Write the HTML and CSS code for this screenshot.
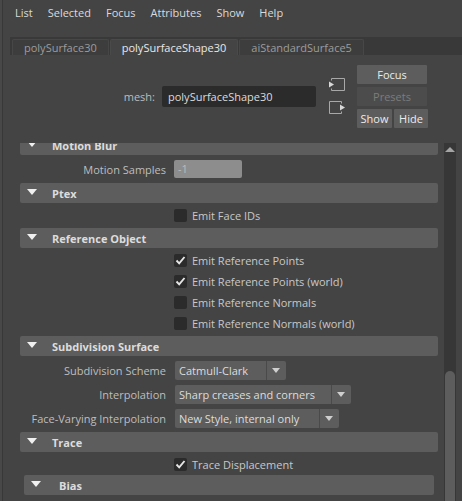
FILE: index.html
```html
<!DOCTYPE html>
<html>
<head>
<meta charset="utf-8">
<link rel="stylesheet" href="styles.css">
</head>
<body>
<div class="app">
  <div class="menubar">
    <span>List</span><span>Selected</span><span>Focus</span><span>Attributes</span><span>Show</span><span>Help</span>
  </div>
  <div class="tabstrip">
    <div class="tab">polySurface30</div>
    <div class="tab active">polySurfaceShape30</div>
    <div class="tab">aiStandardSurface5</div>
  </div>
  <div class="nodebar">
    <div class="meshgroup">
      <span class="meshlabel">mesh:</span>
      <div class="meshfield">polySurfaceShape30</div>
    </div>
    <div class="linkicons">
      <svg width="18" height="15" viewBox="0 0 18 15"><path d="M3.5 3.5V1.5H16.5V13.5H3.5V11.5" fill="none" stroke="#a8a8a8"/><polygon points="1,4.5 6,7.5 1,10.5" fill="#d8d8d8"/></svg>
      <svg width="18" height="15" viewBox="0 0 18 15"><path d="M13.5 3.5V1.5H1.5V13.5H13.5V11.5" fill="none" stroke="#a8a8a8"/><polygon points="12,4.5 17,7.5 12,10.5" fill="#d8d8d8"/></svg>
    </div>
    <div class="buttons">
      <div class="btn wide">Focus</div>
      <div class="btn wide disabled">Presets</div>
      <div class="btnrow"><div class="btn show">Show</div><div class="btn hide">Hide</div></div>
    </div>
  </div>
  <div class="main">
    <div class="scroll">
      <div class="content">
        <div class="section">
          <div class="fhead"><span class="tri"></span><span class="ftitle">Motion Blur</span></div>
          <div class="row tall"><span class="lbl">Motion Samples</span><div class="numfield">-1</div></div>
        </div>
        <div class="section">
          <div class="fhead"><span class="tri"></span><span class="ftitle">Ptex</span></div>
          <div class="row"><span class="lbl"></span><span class="cb"></span><span class="cblbl">Emit Face IDs</span></div>
        </div>
        <div class="section">
          <div class="fhead"><span class="tri"></span><span class="ftitle">Reference Object</span></div>
          <div class="row"><span class="lbl"></span><span class="cb"><svg width="13" height="13" viewBox="0 0 13 13"><polyline points="2.5,6.5 5.2,9.3 10.5,3" fill="none" stroke="#e6e6e6" stroke-width="1.9"/></svg></span><span class="cblbl">Emit Reference Points</span></div>
          <div class="row"><span class="lbl"></span><span class="cb"><svg width="13" height="13" viewBox="0 0 13 13"><polyline points="2.5,6.5 5.2,9.3 10.5,3" fill="none" stroke="#e6e6e6" stroke-width="1.9"/></svg></span><span class="cblbl">Emit Reference Points (world)</span></div>
          <div class="row"><span class="lbl"></span><span class="cb"></span><span class="cblbl">Emit Reference Normals</span></div>
          <div class="row"><span class="lbl"></span><span class="cb"></span><span class="cblbl">Emit Reference Normals (world)</span></div>
        </div>
        <div class="section">
          <div class="fhead"><span class="tri"></span><span class="ftitle">Subdivision Surface</span></div>
          <div class="row tall"><span class="lbl">Subdivision Scheme</span><div class="dd"><span class="ddtext w1">Catmull-Clark</span><span class="ddarrow"></span></div></div>
          <div class="row tall"><span class="lbl">Interpolation</span><div class="dd"><span class="ddtext w2">Sharp creases and corners</span><span class="ddarrow"></span></div></div>
          <div class="row tall"><span class="lbl">Face-Varying Interpolation</span><div class="dd"><span class="ddtext w3">New Style, internal only</span><span class="ddarrow"></span></div></div>
        </div>
        <div class="section">
          <div class="fhead"><span class="tri"></span><span class="ftitle">Trace</span></div>
          <div class="row"><span class="lbl"></span><span class="cb"><svg width="13" height="13" viewBox="0 0 13 13"><polyline points="2.5,6.5 5.2,9.3 10.5,3" fill="none" stroke="#e6e6e6" stroke-width="1.9"/></svg></span><span class="cblbl">Trace Displacement</span></div>
          <div class="subsection">
            <div class="fhead sub"><span class="tri"></span><span class="ftitle">Bias</span></div>
            <div class="row tall"><span class="lbl"></span><div class="numfield dark"></div></div>
          </div>
        </div>
      </div>
    </div>
    <div class="vscroll">
      <span class="uparrow"></span>
      <div class="thumb"></div>
    </div>
  </div>
</div>
</body>
</html>
```

FILE: styles.css
```css
html, body {
  margin: 0;
  padding: 0;
  background: #484848;
  height: 100%;
  overflow: hidden;
}
body {
  font-family: "Open Sans", "Noto Sans", sans-serif;
  font-size: 11px;
  color: #d0d0d0;
}
.app {
  margin-left: 2px;
  border-left: 1px solid #383838;
  background: #444444;
  height: 501px;
  display: flex;
  flex-direction: column;
}
.menubar {
  display: flex;
  gap: 15px;
  padding-left: 12px;
  height: 25px;
  align-items: center;
  color: #dadada;
  font-size: 11px;
}
.tabstrip {
  margin-top: 12px;
  margin-left: 7px;
  height: 18px;
  background: #393939;
  display: flex;
  align-items: flex-end;
  padding-left: 2px;
  gap: 1px;
}
.tab {
  line-height: 15px;
  padding: 0 11px;
  background: #3d3d3d;
  color: #9c9c9c;
  border: 1px solid #474747;
  border-bottom: none;
  border-radius: 2px 2px 0 0;
  box-sizing: border-box;
  height: 16px;
}
.tab.active {
  background: #444444;
  color: #e8e8e8;
  border-color: #4a4a4a;
}
.nodebar {
  height: 88px;
  display: flex;
  justify-content: flex-end;
  align-items: flex-start;
  padding-right: 34px;
}
.meshgroup {
  display: flex;
  align-items: center;
  gap: 7px;
  margin-top: 31px;
}
.meshlabel {
  color: #bdbdbd;
}
.meshfield {
  width: 148px;
  height: 21px;
  line-height: 21px;
  padding-left: 6px;
  background: #2b2b2b;
  border-radius: 2px;
  color: #dcdcdc;
}
.linkicons {
  display: flex;
  flex-direction: column;
  gap: 8px;
  margin-left: 12px;
  margin-top: 22px;
}
.linkicons svg {
  display: block;
}
.buttons {
  margin-left: 11px;
  margin-top: 10px;
  display: flex;
  flex-direction: column;
  gap: 3px;
  width: 71px;
}
.btn {
  height: 19px;
  line-height: 19px;
  text-align: center;
  background: #5d5d5d;
  color: #ececec;
  border-radius: 1px;
}
.btn.wide {
  width: 70px;
}
.btn.disabled {
  background: #4c4c4c;
  color: #7c7c7c;
}
.btnrow {
  display: flex;
  gap: 2px;
}
.btn.show {
  width: 35px;
}
.btn.hide {
  width: 34px;
}
.main {
  flex: 1;
  display: flex;
  min-height: 0;
}
.scroll {
  flex: 1;
  overflow: hidden;
  padding-left: 17px;
  margin-right: 6px;
}
.content {
  margin-top: -8px;
  display: flex;
  flex-direction: column;
}
.section {
  display: flex;
  flex-direction: column;
  padding-bottom: 2px;
}
.fhead {
  height: 20px;
  background: #5d5d5d;
  border-radius: 2px;
  display: flex;
  align-items: center;
  margin-bottom: 2px;
}
.tri {
  width: 0;
  height: 0;
  border-left: 5.5px solid transparent;
  border-right: 5.5px solid transparent;
  border-top: 6px solid #f0f0f0;
  margin-left: 7px;
  margin-top: -3px;
}
.ftitle {
  margin-left: 15px;
  font-weight: bold;
  color: #dcdcdc;
}
.subsection {
  padding: 0 4px;
}
.fhead.sub .ftitle {
  margin-left: 18px;
}
.row {
  height: 21px;
  display: flex;
  align-items: center;
}
.row.tall {
  height: 24px;
}
.lbl {
  width: 146px;
  flex: none;
  text-align: right;
  margin-right: 8px;
  color: #bebebe;
  white-space: nowrap;
}
.subsection .lbl {
  width: 142px;
}
.numfield {
  width: 64px;
  height: 18px;
  line-height: 18px;
  padding-left: 4px;
  background: #8d8d8d;
  color: #bcbcbc;
  border-radius: 2px;
}
.numfield.dark {
  background: #2b2b2b;
  margin-top: 10px;
}
.cb {
  width: 13px;
  height: 13px;
  background: #2b2b2b;
  border-radius: 2px;
  flex: none;
}
.cb svg {
  display: block;
}
.cblbl {
  margin-left: 5px;
  color: #c8c8c8;
}
.dd {
  display: flex;
  height: 19px;
  margin-left: 1px;
  background: #5d5d5d;
  border-radius: 2px;
  overflow: hidden;
}
.ddtext {
  line-height: 19px;
  padding-left: 4px;
  color: #dcdcdc;
  border-right: 1px solid #4a4a4a;
  box-sizing: border-box;
}
.ddtext.w1 { width: 92px; }
.ddtext.w2 { width: 157px; }
.ddtext.w3 { width: 145px; }
.ddarrow {
  width: 19px;
  position: relative;
}
.ddarrow::after {
  content: "";
  position: absolute;
  left: 5px;
  top: 7px;
  border-left: 4.5px solid transparent;
  border-right: 4.5px solid transparent;
  border-top: 5px solid #cfcfcf;
}
.vscroll {
  width: 12px;
  background: #373737;
  margin-right: 6px;
  display: flex;
  flex-direction: column;
  align-items: center;
}
.uparrow {
  margin-top: 4px;
  width: 0;
  height: 0;
  border-left: 5px solid transparent;
  border-right: 5px solid transparent;
  border-bottom: 5px solid #a5a5a5;
}
.thumb {
  margin-top: 219px;
  width: 10px;
  flex: 1;
  background: #5d5d5d;
  border-radius: 5px 5px 0 0;
}
```
